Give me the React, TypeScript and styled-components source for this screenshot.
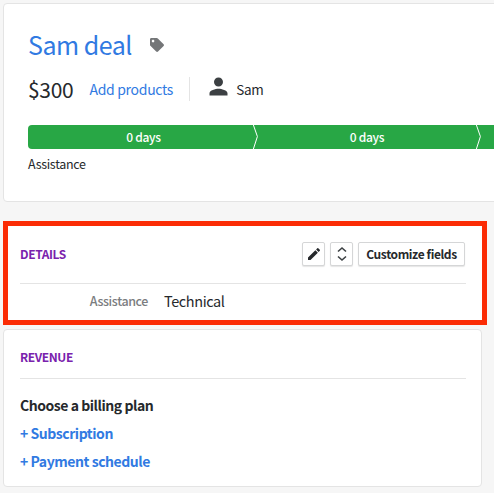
import React from 'react';
import styled, {createGlobalStyle} from 'styled-components';
import {FaTag} from 'react-icons/fa';
import {MdEdit, MdPerson} from 'react-icons/md';

const GlobalStyle = createGlobalStyle`
  html, body {
    margin: 0;
    background: #f6f6f6;
    overflow: hidden;
  }
  body {
    font-family: "Noto Sans CJK SC", "Noto Sans", sans-serif;
    color: #26292c;
  }
  * {
    box-sizing: border-box;
  }
`;

const Page = styled.div`
  width: 494px;
  height: 493px;
  overflow: hidden;
  padding-top: 3px;
  padding-left: 3px;
`;
const DealCard = styled.section`
  width: 560px;
  height: 199px;
  background: #fff;
  border: 1px solid #e4e4e4;
  border-radius: 4px;
  padding: 22px 0 0 24px;
`;
const TitleRow = styled.div`
  display: flex;
  align-items: center;
  height: 36px;
`;
const Title = styled.h1`
  margin: 0;
  font-size: 25px;
  line-height: 36px;
  font-weight: 400;
  letter-spacing: -0.5px;
  color: #317ae2;
`;
const TagIcon = styled(FaTag)`
  width: 14px;
  height: 14px;
  margin: 2px 0 0 18px;
  color: #747678;
`;
const SummaryRow = styled.div`
  display: flex;
  align-items: center;
  height: 24px;
  margin-top: 15px;
`;
const Price = styled.span`
  font-size: 21px;
  line-height: 24px;
  letter-spacing: -0.3px;
`;
const AddProducts = styled.a`
  margin-left: 16px;
  font-size: 14px;
  letter-spacing: -0.3px;
  color: #317ae2;
`;
const Divider = styled.span`
  width: 1px;
  height: 24px;
  margin: 0 16px;
  background: #e4e4e4;
`;
const PersonIcon = styled(MdPerson)`
  width: 27px;
  height: 27px;
  margin: -6px 4px 0 -1px;
  color: #3c4043;
`;
const Owner = styled.span`
  font-size: 13.5px;
  letter-spacing: -0.2px;
`;
const Pipeline = styled.div`
  display: flex;
  align-items: stretch;
  height: 24px;
  margin-top: 24px;
  background: #28a745;
  border-radius: 4px 0 0 4px;
`;
const Stage = styled.div<{$width: number; $inset?: number}>`
  flex: 0 0 ${p => p.$width}px;
  display: flex;
  align-items: center;
  justify-content: center;
  padding-left: ${p => p.$inset || 0}px;
  padding-bottom: 1px;
  color: #fff;
  font-size: 12px;
  font-weight: 500;
  letter-spacing: -0.3px;
`;
const Chevron = styled.svg`
  flex: 0 0 5px;
  width: 5px;
  height: 24px;
`;
const StageName = styled.div`
  margin-top: 6px;
  font-size: 12.5px;
  line-height: 18px;
  letter-spacing: -0.3px;
`;
const DetailsPanel = styled.section`
  width: 484px;
  height: 104px;
  margin-top: 19px;
  background: #fff;
  border: 5px solid #fb2c05;
  padding: 0 16px 0 12px;
`;
const PanelHeader = styled.div<{$height: number; $top?: number; $bottom?: number}>`
  display: flex;
  align-items: center;
  justify-content: space-between;
  height: ${p => p.$height}px;
  padding-top: ${p => p.$top || 0}px;
  padding-bottom: ${p => p.$bottom || 0}px;
  border-bottom: 1px solid #e4e4e4;
`;
const Heading = styled.h2`
  margin: 0;
  font-size: 12px;
  line-height: 16px;
  font-weight: 700;
  letter-spacing: -0.4px;
  color: #7a22ad;
`;
const Actions = styled.div`
  display: flex;
  gap: 5px;
  margin-right: 1px;
`;
const ActionButton = styled.button<{$square?: boolean}>`
  display: flex;
  align-items: center;
  justify-content: center;
  width: ${p => (p.$square ? '23px' : '107px')};
  height: 24px;
  padding: 0;
  background: #fff;
  border: 1px solid #d5d6d7;
  border-radius: 2px;
  box-shadow: 0 1px 1px rgba(38, 41, 44, 0.12);
  font-family: inherit;
  font-size: 12px;
  font-weight: 600;
  letter-spacing: -0.4px;
  color: #26292c;
`;
const FieldRow = styled.div`
  display: grid;
  grid-template-columns: 128px 1fr;
  column-gap: 16px;
  align-items: center;
  height: 32px;
`;
const FieldLabel = styled.span`
  text-align: right;
  font-size: 12.5px;
  font-weight: 500;
  letter-spacing: -0.4px;
  color: #7b7d80;
`;
const FieldValue = styled.span`
  font-size: 14.5px;
  letter-spacing: -0.4px;
`;
const RevenueCard = styled.section`
  width: 479px;
  height: 158px;
  margin-top: 4px;
  background: #fff;
  border: 1px solid #e4e4e4;
  border-radius: 4px;
  padding: 0 15px 0 16px;
`;
const PlanTitle = styled.div`
  margin-top: 16px;
  font-size: 14px;
  line-height: 20px;
  font-weight: 600;
  letter-spacing: -0.45px;
`;
const PlanLink = styled.a`
  display: block;
  margin-top: 8px;
  font-size: 14px;
  line-height: 20px;
  font-weight: 600;
  letter-spacing: -0.45px;
  color: #317ae2;
`;

function StageChevron() {
  return (
    <Chevron viewBox="0 0 5 24">
      <path d="M0.4 0 L4.4 11.5 L0.4 24" fill="none" stroke="#fff" strokeWidth="1"/>
    </Chevron>
  );
}

function App() {
  return (
    <Page>
      <GlobalStyle/>
      <DealCard>
        <TitleRow>
          <Title>Sam deal</Title>
          <TagIcon/>
        </TitleRow>
        <SummaryRow>
          <Price>$300</Price>
          <AddProducts>Add products</AddProducts>
          <Divider/>
          <PersonIcon/>
          <Owner>Sam</Owner>
        </SummaryRow>
        <Pipeline>
          <Stage $width={225} $inset={6}>0 days</Stage>
          <StageChevron/>
          <Stage $width={218}>0 days</Stage>
          <StageChevron/>
        </Pipeline>
        <StageName>Assistance</StageName>
      </DealCard>
      <DetailsPanel>
        <PanelHeader $height={58} $bottom={2}>
          <Heading>DETAILS</Heading>
          <Actions>
            <ActionButton $square aria-label="Edit"><MdEdit size={16}/></ActionButton>
            <ActionButton $square aria-label="Expand">
              <svg width="12" height="16" viewBox="0 0 12 16">
                <path d="M2 5.5 L6 2 L10 5.5 M2 10.5 L6 14 L10 10.5" fill="none" stroke="#3c4043" strokeWidth="1.6"/>
              </svg>
            </ActionButton>
            <ActionButton>Customize fields</ActionButton>
          </Actions>
        </PanelHeader>
        <FieldRow>
          <FieldLabel>Assistance</FieldLabel>
          <FieldValue>Technical</FieldValue>
        </FieldRow>
      </DetailsPanel>
      <RevenueCard>
        <PanelHeader $height={49} $top={6}>
          <Heading>REVENUE</Heading>
        </PanelHeader>
        <PlanTitle>Choose a billing plan</PlanTitle>
        <PlanLink>+ Subscription</PlanLink>
        <PlanLink>+ Payment schedule</PlanLink>
      </RevenueCard>
    </Page>
  );
}

export default App;
